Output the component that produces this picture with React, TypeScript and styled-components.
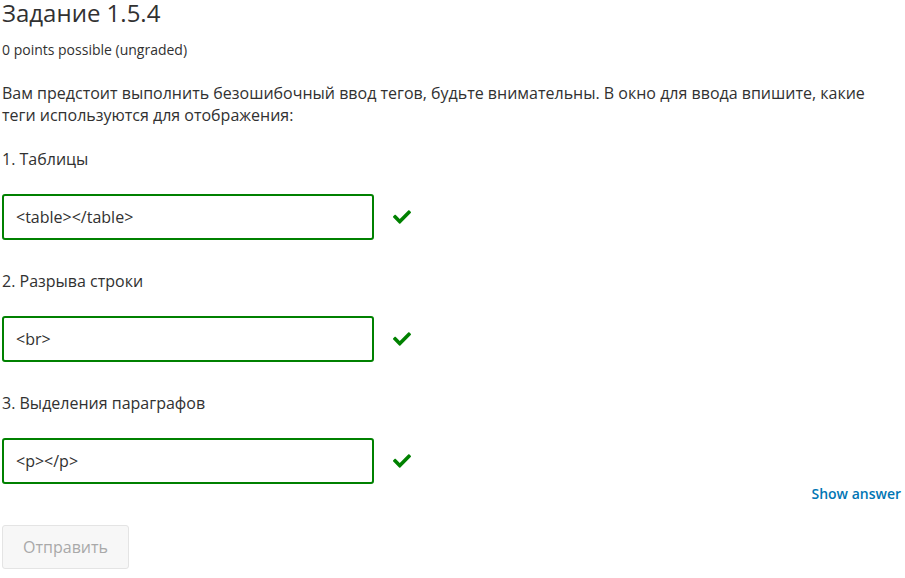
import React from "react";
import styled, { createGlobalStyle } from "styled-components";
import { FaCheck } from "react-icons/fa";

const Global = createGlobalStyle`
  html, body { margin: 0; padding: 0; background: #fff; }
  body { font-family: "Open Sans", "Noto Sans", sans-serif; color: #313131; }
`;

const Page = styled.div`
  padding: 0 4px 0 2px;
  width: 905px;
  box-sizing: border-box;
`;

const Title = styled.h3`
  margin: 0;
  font-size: 24px;
  font-weight: 400;
  line-height: 26px;
  color: #313131;
`;

const Meta = styled.div`
  margin-top: 14px;
  font-size: 14px;
  line-height: 20px;
  color: #313131;
`;

const Prompt = styled.p`
  margin: 22px 0 0;
  font-size: 16px;
  line-height: 22px;
`;

const Question = styled.div`
  margin-top: 22px;
  & + & {
    margin-top: 30px;
  }
`;

const Label = styled.p`
  margin: 0;
  font-size: 16px;
  line-height: 22px;
`;

const Row = styled.div`
  display: flex;
  align-items: center;
  gap: 19px;
  margin-top: 24px;
`;

const Field = styled.input`
  box-sizing: border-box;
  width: 372px;
  height: 46px;
  border: 2px solid #008100;
  border-radius: 3px;
  padding: 0 12px;
  font-family: "Open Sans", sans-serif;
  font-size: 16px;
  color: #313131;
  background: #fff;
  outline: none;
`;

const Status = styled.span`
  display: inline-flex;
  color: #008100;
`;

const Actions = styled.div`
  display: flex;
  justify-content: flex-end;
`;

const ShowAnswer = styled.button`
  border: none;
  background: none;
  padding: 0;
  font-family: "Open Sans", sans-serif;
  font-size: 14px;
  font-weight: 600;
  color: #0075b4;
`;

const Submit = styled.button`
  margin-top: 22px;
  box-sizing: border-box;
  width: 127px;
  height: 44px;
  border: 1px solid #e4e4e4;
  border-radius: 3px;
  background: #f7f7f7;
  font-family: "Open Sans", sans-serif;
  font-size: 16px;
  color: #a9a9a9;
`;

const items = [
  { label: "1. Таблицы", value: "<table></table>" },
  { label: "2. Разрыва строки", value: "<br>" },
  { label: "3. Выделения параграфов", value: "<p></p>" },
];

export default function App() {
  return (
    <Page>
      <Global />
      <Title>Задание 1.5.4</Title>
      <Meta>0 points possible (ungraded)</Meta>
      <Prompt>
        Вам предстоит выполнить безошибочный ввод тегов, будьте внимательны. В окно для ввода впишите, какие
        теги используются для отображения:
      </Prompt>
      {items.map((it) => (
        <Question key={it.label}>
          <Label>{it.label}</Label>
          <Row>
            <Field readOnly value={it.value} />
            <Status>
              <FaCheck size={18} />
            </Status>
          </Row>
        </Question>
      ))}
      <Actions>
        <ShowAnswer>Show answer</ShowAnswer>
      </Actions>
      <Submit disabled>Отправить</Submit>
    </Page>
  );
}
